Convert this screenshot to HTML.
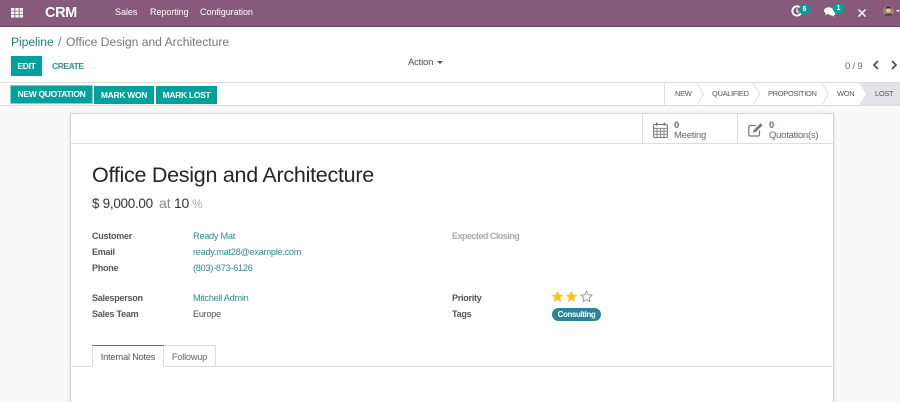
<!DOCTYPE html>
<html><head><meta charset="utf-8">
<style>
html,body{margin:0;padding:0;width:900px;height:402px;overflow:hidden;background:#f9f9f9;font-family:"Liberation Sans",sans-serif;color:#4c4c4c}
#r{position:relative;width:900px;height:402px;overflow:hidden;background:#f9f9f9}
.a{position:absolute;white-space:nowrap;line-height:14px}
.box{position:absolute;box-sizing:border-box}
.w{color:#fff;font-size:9px;letter-spacing:-.05px}
.lb{font-size:9px;font-weight:bold;color:#555;letter-spacing:-.25px}
.v{font-size:9.2px;color:#555;letter-spacing:-.3px}
.t{font-size:9.2px;color:#2f8a88;letter-spacing:-.27px}
.btn{position:absolute;background:#00a09d;color:#fff;font-size:8.5px;font-weight:bold;letter-spacing:-.3px;text-align:center;box-sizing:border-box;height:18px;line-height:18px}
.st{font-size:7.5px;color:#55555d;letter-spacing:-.32px}
</style></head><body><div id="r">
<!-- navbar -->
<div class="box" style="left:0;top:0;width:900px;height:27px;background:#875a7b;border-bottom:1px solid #6f4a66"></div>
<svg class="box" style="left:11px;top:7.5px" width="12" height="10" viewBox="0 0 12 10" fill="#fff"><rect x="0" y="0" width="3.4" height="2.7"/><rect x="4.3" y="0" width="3.4" height="2.7"/><rect x="8.6" y="0" width="3.4" height="2.7"/><rect x="0" y="3.4" width="3.4" height="2.7"/><rect x="4.3" y="3.4" width="3.4" height="2.7"/><rect x="8.6" y="3.4" width="3.4" height="2.7"/><rect x="0" y="6.8" width="3.4" height="2.7"/><rect x="4.3" y="6.8" width="3.4" height="2.7"/><rect x="8.6" y="6.8" width="3.4" height="2.7"/></svg>
<div class="a" style="left:45px;top:6px;color:#fff;font-size:14.5px;font-weight:bold;letter-spacing:-.4px">CRM</div>
<div class="a w" style="left:115px;top:5px">Sales</div>
<div class="a w" style="left:150px;top:5px">Reporting</div>
<div class="a w" style="left:200px;top:5px">Configuration</div>
<!-- systray -->
<svg class="box" style="left:791px;top:5px" width="12" height="12" viewBox="0 0 12 12"><path d="M9.6 3.2A4.6 4.6 0 1 0 10.4 7" fill="none" stroke="#fff" stroke-width="1.9"/><path d="M6 3.5V6.5L8 7.5" fill="none" stroke="#fff" stroke-width="1.2"/></svg>
<div class="box" style="left:799px;top:4px;width:11px;height:11px;border-radius:5.5px;background:#00a09d;color:#fff;font-size:7px;font-weight:bold;text-align:center;line-height:11px">6</div>
<svg class="box" style="left:824px;top:7px" width="12" height="10" viewBox="0 0 12 10" fill="#fff"><ellipse cx="4.6" cy="3.6" rx="4.6" ry="3.4"/><path d="M2 6L1 8.5 4.5 6.5Z"/><ellipse cx="8" cy="5.8" rx="3.6" ry="2.8"/><path d="M9.5 8L11 9.8 7.5 8.2Z"/></svg>
<div class="box" style="left:833px;top:3px;width:11px;height:11px;border-radius:5.5px;background:#00a09d;color:#fff;font-size:7px;font-weight:bold;text-align:center;line-height:11px">1</div>
<svg class="box" style="left:857px;top:8px" width="10" height="10" viewBox="0 0 10 10"><path d="M1.5 1.5L8.5 8.5M8.5 1.5L1.5 8.5" stroke="#fff" stroke-width="1.5"/></svg>
<svg class="box" style="left:883px;top:5px" width="11" height="12" viewBox="0 0 11 12"><circle cx="5.5" cy="6" r="5.3" fill="#a08468"/><circle cx="5.5" cy="5.3" r="2.6" fill="#dcbfa3"/><path d="M2.5 4.2A3 3 0 0 1 8.5 4.2L7 3.4H4Z" fill="#3e2c24"/><path d="M1.5 10A5 4 0 0 0 9.5 10L7.5 8.4H3.5Z" fill="#5d4a3f"/></svg>
<svg class="box" style="left:896px;top:9px" width="4" height="4"><path d="M0 1H4L2 3Z" fill="#fff"/></svg>

<!-- control panel -->
<div class="box" style="left:0;top:28px;width:900px;height:78px;background:#fff;border-bottom:1px solid #ddd"></div>
<div class="a" style="left:11px;top:35px;font-size:12.1px;color:#1f7d7b;letter-spacing:-.05px">Pipeline</div>
<div class="a" style="left:58px;top:35px;font-size:12.1px;color:#777">/</div>
<div class="a" style="left:66px;top:35px;font-size:12.1px;color:#777">Office Design and Architecture</div>
<div class="btn" style="left:11px;top:56px;width:31px;height:20px;line-height:20px">EDIT</div>
<div class="a" style="left:52px;top:59px;font-size:8.5px;font-weight:bold;color:#2f9190;letter-spacing:-.45px">CREATE</div>
<div class="a" style="left:408px;top:55.5px;font-size:9.5px;color:#4c4c4c;letter-spacing:-.2px">Action</div>
<svg class="box" style="left:437px;top:61px" width="6" height="4"><path d="M0 0H6L3 3Z" fill="#4c4c4c"/></svg>
<div class="a" style="left:845px;top:60px;font-size:9.5px;color:#666;letter-spacing:-.2px">0 / 9</div>
<svg class="box" style="left:872px;top:60px" width="8" height="10" viewBox="0 0 8 10"><path d="M6 1L2 5 6 9" fill="none" stroke="#4a4f5a" stroke-width="1.7"/></svg>
<svg class="box" style="left:890px;top:60px" width="8" height="10" viewBox="0 0 8 10"><path d="M2 1L6 5 2 9" fill="none" stroke="#4a4f5a" stroke-width="1.7"/></svg>

<!-- statusbar -->
<div class="box" style="left:0;top:82px;width:900px;height:24px;background:#fff;border-top:1px solid #ddd;border-bottom:1px solid #ddd"></div>
<div class="btn" style="left:10px;top:85px;width:83px;height:18.5px;border:1px solid #7fcfce;line-height:16.5px">NEW QUOTATION</div>
<div class="btn" style="left:94px;top:85.5px;width:60px">MARK WON</div>
<div class="btn" style="left:156px;top:85.5px;width:61px">MARK LOST</div>
<svg class="box" style="left:664px;top:83px" width="236" height="22" viewBox="0 0 236 22">
<path d="M195 0L202 11 195 22H236V0Z" fill="#e2e2e8"/>
<path d="M.5 0V22" stroke="#ddd"/>
<g fill="none" stroke="#e0e0e0"><path d="M33 0L39.500 11 33 22"/><path d="M89 0L96 11 89 22"/><path d="M158 0L164.500 11 158 22"/></g></svg>
<div class="a st" style="left:675px;top:87px">NEW</div>
<div class="a st" style="left:712px;top:87px">QUALIFIED</div>
<div class="a st" style="left:768px;top:87px">PROPOSITION</div>
<div class="a st" style="left:837px;top:87px">WON</div>
<div class="a st" style="left:875px;top:87px">LOST</div>

<!-- sheet -->
<div class="box" style="left:70px;top:113px;width:764px;height:300px;background:#fff;border:1px solid #d5d5d5;box-shadow:0 1px 4px rgba(0,0,0,.1)"></div>
<div class="box" style="left:71px;top:143px;width:762px;height:1px;background:#ddd"></div>
<div class="box" style="left:642px;top:114px;width:1px;height:29px;background:#ddd"></div>
<div class="box" style="left:737px;top:114px;width:1px;height:29px;background:#ddd"></div>
<svg class="box" style="left:653px;top:122px" width="15" height="16" viewBox="0 0 15 16" fill="none" stroke="#777"><rect x=".6" y="2.5" width="13.8" height="13" rx="1" stroke-width="1.1"/><path d="M.6 6.3H14.4M.6 9.2H14.4M.6 12.3H14.4M4 6.3V15.5M7.5 6.3V15.5M11 6.3V15.5" stroke-width=".8"/><path d="M3.7 .5V3.8M11.3 .5V3.8" stroke-width="1.6"/></svg>
<div class="a" style="left:674px;top:120px;font-size:9.5px;font-weight:bold;color:#875a7b;line-height:12px">0</div>
<div class="a" style="left:674px;top:130px;font-size:9.5px;color:#666;line-height:12px;letter-spacing:-.25px">Meeting</div>
<svg class="box" style="left:748px;top:122px" width="16" height="15" viewBox="0 0 16 15" fill="none" stroke="#777"><path d="M11.5 8.5V12.5A1.5 1.5 0 0 1 10 14H2.3A1.5 1.5 0 0 1 .8 12.5V5A1.5 1.500 0 0 1 2.3 3.5H8" stroke-width="1.2"/><path d="M5 10.5L5.8 8 12.6 1.3 14.6 3.3 7.7 10Z" fill="#777" stroke="none"/></svg>
<div class="a" style="left:769px;top:120px;font-size:9.5px;font-weight:bold;color:#875a7b;line-height:12px">0</div>
<div class="a" style="left:769px;top:130px;font-size:9.5px;color:#666;line-height:12px;letter-spacing:-.25px">Quotation(s)</div>

<div class="a" style="left:92px;top:162px;font-size:21.5px;line-height:26px;color:#212529;letter-spacing:-.27px">Office Design and Architecture</div>
<div class="a" style="left:92px;top:196px;font-size:13.500px;line-height:16px;color:#333;letter-spacing:-.3px">$ 9,000.00</div>
<div class="a" style="left:159px;top:195px;font-size:14px;line-height:16px;color:#888">at</div>
<div class="a" style="left:174px;top:195px;font-size:14px;line-height:16px;color:#333;letter-spacing:-.3px">10</div>
<div class="a" style="left:192px;top:196px;font-size:12px;line-height:16px;color:#aaa">%</div>

<div class="a lb" style="left:92px;top:229px">Customer</div>
<div class="a t" style="left:193px;top:229px">Ready Mat</div>
<div class="a lb" style="left:92px;top:245px">Email</div>
<div class="a t" style="left:193px;top:245px">ready.mat28@example.com</div>
<div class="a lb" style="left:92px;top:261px">Phone</div>
<div class="a t" style="left:193px;top:261px">(803)-873-6126</div>
<div class="a lb" style="left:92px;top:291px">Salesperson</div>
<div class="a t" style="left:193px;top:291px">Mitchell Admin</div>
<div class="a lb" style="left:92px;top:307px">Sales Team</div>
<div class="a v" style="left:193px;top:307px">Europe</div>

<div class="a lb" style="left:452px;top:229px;color:#aaa;letter-spacing:-.52px">Expected Closing</div>
<div class="a lb" style="left:452px;top:291px">Priority</div>
<div class="a lb" style="left:452px;top:307px">Tags</div>
<svg class="box" style="left:551px;top:290px" width="42" height="13" viewBox="0 0 42 13">
<path d="M6.5 .8L8.2 4.6 12.4 5 9.2 7.8 10.2 12 6.5 9.8 2.8 12 3.8 7.8 .6 5 4.8 4.6Z" fill="#f5c518"/>
<path d="M20.5 .8L22.2 4.6 26.4 5 23.2 7.8 24.2 12 20.5 9.8 16.8 12 17.800 7.8 14.6 5 18.8 4.6Z" fill="#f5c518"/>
<path d="M35.5 1.2L37.1 4.8 41 5.2 38.1 7.8 39 11.6 35.5 9.6 32 11.6 32.9 7.8 30 5.2 33.9 4.8Z" fill="none" stroke="#888" stroke-width=".8"/></svg>
<div class="box" style="left:552px;top:308px;width:49px;height:13px;border-radius:6.5px;background:#2c8397;color:#fff;font-size:8px;font-weight:bold;letter-spacing:-.4px;text-align:center;line-height:13px">Consulting</div>

<!-- tabs -->
<div class="box" style="left:71px;top:366px;width:762px;height:1px;background:#ddd"></div>
<div class="box" style="left:92px;top:345px;width:72px;height:22px;background:#fff;border:1px solid #ddd;border-top-color:#875a7b;border-bottom:none;font-size:9.2px;letter-spacing:-.2px;color:#555;text-align:center;line-height:22px">Internal Notes</div>
<div class="box" style="left:164px;top:345px;width:52px;height:21px;background:#fff;border:1px solid #ddd;border-left:none;border-bottom:none;font-size:9.2px;letter-spacing:-.2px;color:#666;text-align:center;line-height:22px">Followup</div>
</div></body></html>
